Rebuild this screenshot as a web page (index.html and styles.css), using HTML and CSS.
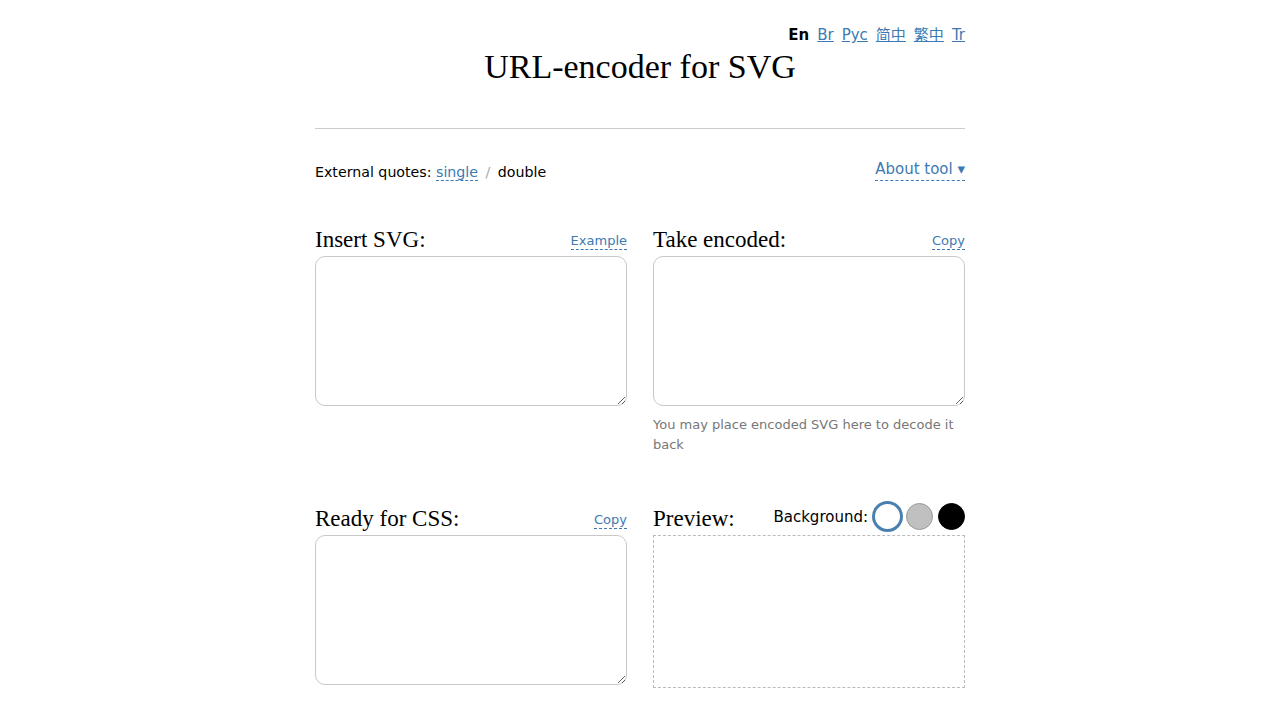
FILE: index.html
```html
<!DOCTYPE html>
<html lang="en">
<head>
<meta charset="utf-8">
<title>URL-encoder for SVG</title>
<link rel="stylesheet" href="styles.css">
</head>
<body>
<div class="page">
  <header class="header">
    <nav class="langs">
      <span class="lang current">En</span>
      <a class="lang" href="#">Br</a>
      <a class="lang" href="#">Рус</a>
      <a class="lang" href="#">简中</a>
      <a class="lang" href="#">繁中</a>
      <a class="lang" href="#">Tr</a>
    </nav>
    <h1 class="title">URL-encoder for SVG</h1>
  </header>
  <hr class="rule">
  <div class="options">
    <div class="quotes">External quotes: <span class="dashed">single</span> <span class="slash">/</span> double</div>
    <span class="dashed about">About tool ▾</span>
  </div>
  <div class="grid">
    <section class="cell">
      <div class="cell-head">
        <h2 class="cell-title">Insert SVG:</h2>
        <span class="dashed small">Example</span>
      </div>
      <textarea class="area"></textarea>
    </section>
    <section class="cell">
      <div class="cell-head">
        <h2 class="cell-title">Take encoded:</h2>
        <span class="dashed small">Copy</span>
      </div>
      <textarea class="area"></textarea>
      <p class="hint">You may place encoded SVG here to decode it back</p>
    </section>
    <section class="cell">
      <div class="cell-head">
        <h2 class="cell-title">Ready for CSS:</h2>
        <span class="dashed small">Copy</span>
      </div>
      <textarea class="area"></textarea>
    </section>
    <section class="cell">
      <div class="cell-head">
        <h2 class="cell-title">Preview:</h2>
        <div class="bg">
          <span class="bg-label">Background:</span>
          <span class="swatch white selected"></span>
          <span class="swatch gray"></span>
          <span class="swatch black"></span>
        </div>
      </div>
      <div class="preview"></div>
    </section>
  </div>
</div>
</body>
</html>
```

FILE: styles.css
```css
* { box-sizing: border-box; }
body {
  margin: 0;
  background: #fff;
  color: #000;
  font-family: "DejaVu Sans", "Noto Sans CJK SC", sans-serif;
  font-size: 14.2px;
}
.page {
  width: 650px;
  margin: 0 auto;
  padding-top: 25px;
}
.header {
  display: flex;
  flex-direction: column;
}
.langs {
  display: flex;
  justify-content: flex-end;
  gap: 8px;
  font-size: 15px;
  line-height: 20px;
}
.lang { color: #3d7ab3; text-decoration: underline; }
.lang.current { color: #000; font-weight: bold; text-decoration: none; }
.title {
  margin: 2px 0 0;
  text-align: center;
  font-family: "Liberation Serif", serif;
  font-weight: normal;
  font-size: 34px;
  line-height: 40px;
}
.rule {
  margin: 41px 0 0;
  border: 0;
  border-top: 1px solid #ccc;
}
.options {
  display: flex;
  justify-content: space-between;
  align-items: flex-start;
  margin-top: 29px;
  line-height: 22px;
}
.quotes { padding-top: 3px; }
.about { font-size: 15px; }
.dashed {
  color: #3d7ab3;
  border-bottom: 1px dashed #3d7ab3;
}
.slash { color: #aaa; margin: 0 3px; }
.grid {
  display: grid;
  grid-template-columns: 312px 312px;
  column-gap: 26px;
  row-gap: 50px;
  margin-top: 43px;
}
.cell-head {
  display: flex;
  justify-content: space-between;
  align-items: flex-end;
  height: 28px;
  margin-bottom: 2px;
}
.cell-title {
  margin: 0;
  font-family: "Liberation Serif", serif;
  font-weight: normal;
  font-size: 23px;
  line-height: 28px;
}
.small {
  font-size: 13px;
  line-height: 16px;
  margin-bottom: 4px;
}
.area {
  display: block;
  width: 312px;
  height: 150px;
  border: 1px solid #c8c8c8;
  border-radius: 10px;
  resize: vertical;
  margin: 0;
}
.hint {
  margin: 9px 0 0;
  color: #777;
  font-size: 13px;
  line-height: 20px;
}
.bg {
  display: flex;
  align-items: center;
  gap: 3px;
  margin-bottom: 1px;
}
.bg-label { font-size: 15px; margin-right: 1px; }
.swatch {
  width: 27px;
  height: 27px;
  border-radius: 50%;
  border: 1px solid #999;
}
.swatch.white { background: #fff; width: 31px; height: 31px; border: 3px solid #4a80b0; }
.swatch.gray { background: #c0c0c0; }
.swatch.black { background: #000; border-color: #000; margin-left: 2px; }
.preview {
  height: 153px;
  border: 1px dashed #bbb;
  margin-top: 1px;
}
```
